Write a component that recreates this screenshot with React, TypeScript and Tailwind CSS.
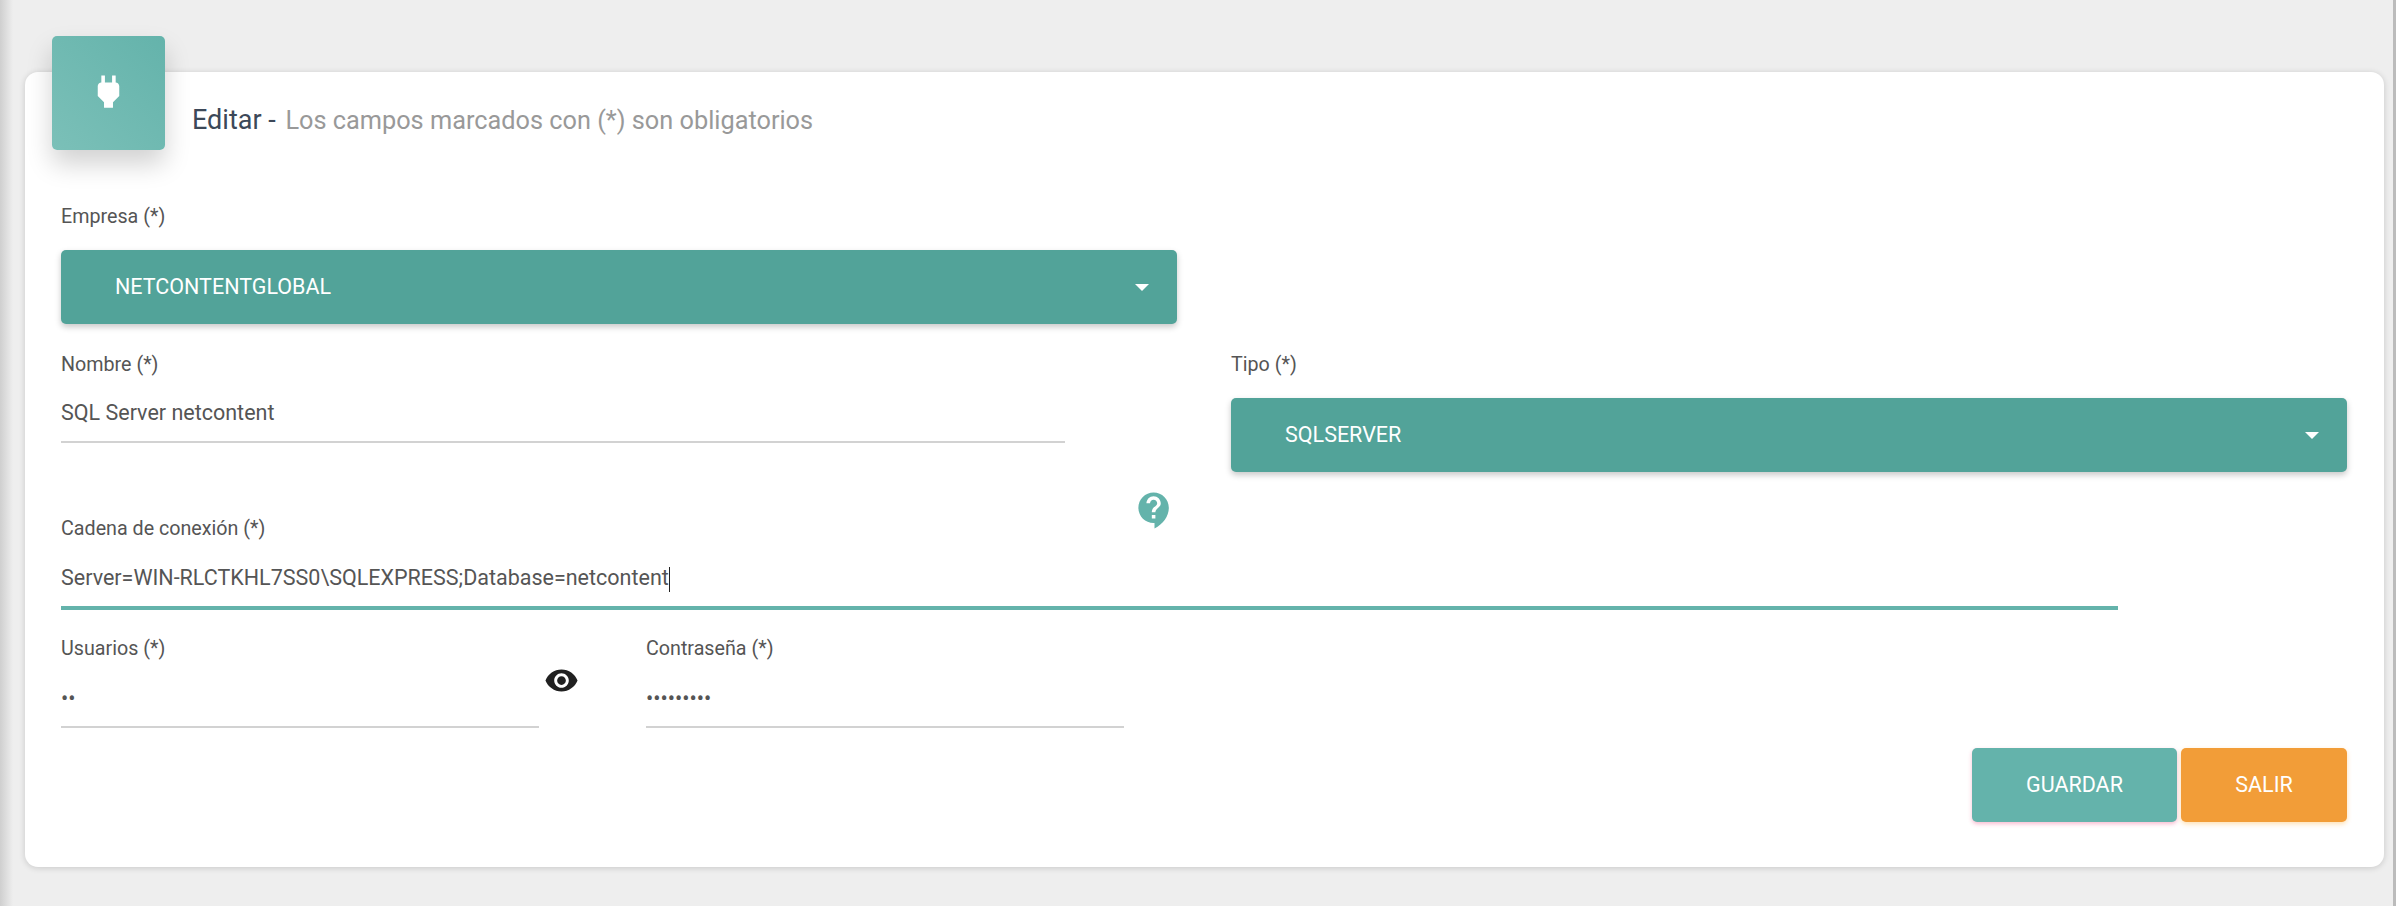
const PlugIcon = () => (
  <svg viewBox="0 0 24 24" className="w-[43px] h-[43px] fill-white">
    <path d="M16.01 7L16 3h-2v4h-4V3H8v4h-.01C7 6.99 6 7.99 6 8.99v5.49L9.5 18v3h5v-3l3.5-3.51v-5.5c0-1-1-2-1.99-1.99z" />
  </svg>
);

const HelpIcon = () => (
  <svg viewBox="0 0 24 24" className="w-[43px] h-[43px] fill-[#64b3ab]">
    <path d="M11.5 2C6.81 2 3 5.81 3 10.5S6.81 19 11.5 19h.5v3c4.86-2.34 8-7 8-11.5C20 5.81 16.19 2 11.5 2zm1 14.5h-2v-2h2v2zm0-3.5h-2c0-3.25 3-3 3-5 0-1.1-.9-2-2-2s-2 .9-2 2h-2c0-2.21 1.79-4 4-4s4 1.79 4 4c0 2.5-3 2.75-3 5z" />
  </svg>
);

const EyeIcon = () => (
  <svg viewBox="0 0 24 24" className="w-[35px] h-[35px] fill-[#212121]">
    <path d="M12 4.5C7 4.5 2.73 7.61 1 12c1.73 4.39 6 7.5 11 7.5s9.27-3.11 11-7.5c-1.73-4.39-6-7.5-11-7.5zM12 17c-2.76 0-5-2.24-5-5s2.24-5 5-5 5 2.24 5 5-2.24 5-5 5zm0-8c-1.66 0-3 1.34-3 3s1.34 3 3 3 3-1.34 3-3-1.34-3-3-3z" />
  </svg>
);

const Label = ({ children }: { children: string }) => (
  <div className="h-7 pt-px text-[19.7px] leading-7 text-[#555555]">{children}</div>
);

const SelectBox = ({ value }: { value: string }) => (
  <div className="h-[74px] flex items-center justify-between pl-[54px] pr-[28px] rounded-[5px] bg-[#52a399] text-white text-[21.5px] shadow-[0_3px_6px_rgba(0,0,0,0.22)]">
    <span>{value}</span>
    <span className="w-0 h-0 border-x-[7px] border-x-transparent border-t-[7px] border-t-white" />
  </div>
);

const TextField = ({ label, value }: { label: string; value: string }) => (
  <div>
    <Label>{label}</Label>
    <div className="mt-[21px] h-[44px] leading-[28px] text-[21.5px] text-[#555555] border-b-2 border-[#d2d2d2]">
      {value}
    </div>
  </div>
);

const PasswordField = ({ label, value }: { label: string; value: string }) => (
  <div>
    <Label>{label}</Label>
    <div className="mt-[20px] h-[46px] pt-[3px] leading-[28px] text-[21.5px] text-[#555555] border-b-2 border-[#d2d2d2]">
      {value}
    </div>
  </div>
);

export default function App() {
  return (
    <div className="flex min-h-[906px] bg-[#eeeeee] font-['Roboto',sans-serif]">
      <div className="w-[13px] shrink-0 bg-gradient-to-r from-[#cfcfcf] to-[#eeeeee]" />
      <main className="flex-1 pt-[72px] pl-[12px] pr-[9px]">
        <div className="relative bg-white rounded-[13px] pt-[130px] pb-[45px] pl-[36px] pr-[37px] shadow-[0_1px_6px_rgba(0,0,0,0.16)]">
          <div className="absolute left-[27px] top-[-36px] w-[113px] h-[114px] rounded-[5px] flex items-start justify-center pt-[34px] bg-gradient-to-tr from-[#7bc0b8] to-[#64b3ab] shadow-[0_14px_26px_rgba(0,0,0,0.18)]">
            <PlugIcon />
          </div>
          <div className="absolute left-[167px] top-[31px] text-[27px] leading-[34px] text-[#3c4858]">
            Editar -{" "}
            <span className="ml-[3px] text-[#999999] text-[25.3px]">Los campos marcados con (*) son obligatorios</span>
          </div>

          <div className="w-[1116px]">
            <Label>Empresa (*)</Label>
            <div className="mt-[20px]">
              <SelectBox value="NETCONTENTGLOBAL" />
            </div>
          </div>

          <div className="mt-[26px] grid grid-cols-[1116px_1116px] gap-x-[54px]">
            <div className="w-[1004px]">
              <TextField label="Nombre (*)" value="SQL Server netcontent" />
            </div>
            <div>
              <Label>Tipo (*)</Label>
              <div className="mt-[20px]">
                <SelectBox value="SQLSERVER" />
              </div>
            </div>
          </div>

          <div className="relative mt-[42px] w-[2057px]">
            <div className="absolute left-[1072px] top-[-25px]">
              <HelpIcon />
            </div>
            <Label>Cadena de conexión (*)</Label>
            <div className="mt-[22px] h-[46px] leading-[28px] text-[21.5px] text-[#555555] border-b-[4px] border-[#64b3ab]">
              Server=WIN-RLCTKHL7SS0\SQLEXPRESS;Database=netcontent
              <span className="inline-block w-[1px] h-[25px] align-middle bg-[#222222]" />
            </div>
          </div>

          <div className="mt-[24px] flex items-start">
            <div className="w-[478px]">
              <PasswordField label="Usuarios (*)" value="••" />
            </div>
            <div className="ml-[5px] mt-[29px] mr-[67px]">
              <EyeIcon />
            </div>
            <div className="w-[478px]">
              <PasswordField label="Contraseña (*)" value="•••••••••" />
            </div>
          </div>

          <div className="mt-[20px] flex justify-end gap-[4px]">
            <button className="w-[205px] h-[74px] rounded-[5px] bg-[#64b3ab] text-white text-[21.5px] shadow-[0_2px_4px_rgba(233,30,99,0.3)]">
              GUARDAR
            </button>
            <button className="w-[166px] h-[74px] rounded-[5px] bg-[#f29d38] text-white text-[21.5px] shadow-[0_2px_5px_rgba(255,152,0,0.3)]">
              SALIR
            </button>
          </div>
        </div>
      </main>
      <div className="w-1 shrink-0 bg-[#bbbbbb]" />
    </div>
  );
}
